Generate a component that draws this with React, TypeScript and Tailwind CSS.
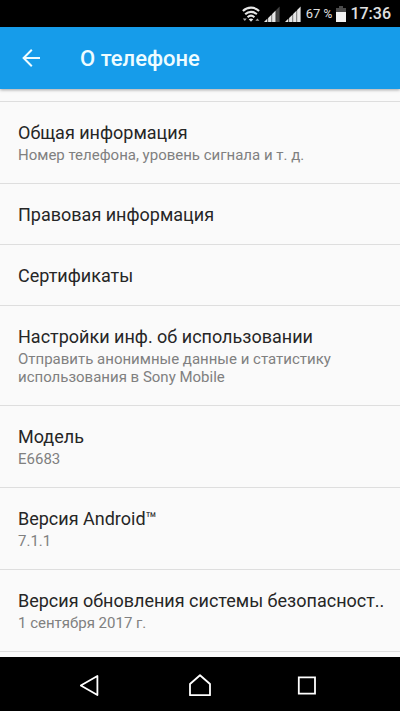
type AboutItem = {
  title: string;
  lines?: string[];
};

const ITEMS: AboutItem[] = [
  { title: 'Общая информация', lines: ['Номер телефона, уровень сигнала и т. д.'] },
  { title: 'Правовая информация' },
  { title: 'Сертификаты' },
  {
    title: 'Настройки инф. об использовании',
    lines: ['Отправить анонимные данные и статистику', 'использования в Sony Mobile'],
  },
  { title: 'Модель', lines: ['E6683'] },
  { title: 'Версия Android™', lines: ['7.1.1'] },
  { title: 'Версия обновления системы безопасност..', lines: ['1 сентября 2017 г.'] },
];

function WifiIcon() {
  return (
    <svg width="18" height="16" viewBox="0 0 18 16" fill="none" stroke="#e6e6e6" strokeWidth="2.2">
      <path d="M.9 5C5.6.6 12.4.6 17.1 5" />
      <path d="M3.2 8.2c3.4-3.2 8.2-3.2 11.6 0" />
      <path d="M5.6 11.2c2.1-1.9 4.7-1.9 6.8 0" />
      <path d="M9 15.8 6.7 13.3c1.4-1 3.2-1 4.6 0z" fill="#e6e6e6" stroke="none" />
      <path d="M.8 12.6h4L2.8 15zM13.4 14.8h4l-2-2.4z" fill="#a8a8a8" stroke="none" />
    </svg>
  );
}

// weak: последняя полоска погашена
function SignalIcon({ weak = false }: { weak?: boolean }) {
  return (
    <svg width="16" height="16" viewBox="0 0 16 16">
      <path d="M0 16 3.4 12.6V16z" fill="#e6e6e6" />
      <path d="M4.1 11.9 7.6 8.4V16H4.1z" fill="#e6e6e6" />
      <path d="M8.1 7.9 11.6 4.4V16H8.1z" fill="#e6e6e6" />
      <path d="M12.1 3.9 15.6.4V16h-3.5z" fill={weak ? '#444444' : '#e6e6e6'} />
    </svg>
  );
}

function BatteryIcon() {
  return (
    <svg width="10" height="16" viewBox="0 0 10 16">
      <path d="M3 0h4v2h3v4H0V2h3z" fill="#4a4a4a" />
      <path d="M0 6h10v10H0z" fill="#f2f2f2" />
    </svg>
  );
}

function StatusBar() {
  return (
    <div className="flex h-[27px] items-center justify-end bg-black pr-[9px] text-[#e0e0e0]">
      <WifiIcon />
      <span className="ml-1 flex gap-[5px]">
        <SignalIcon weak />
        <SignalIcon />
      </span>
      <span className="ml-[5px] text-[13px]">
        67 <span className="text-[12px]">%</span>
      </span>
      <span className="ml-1">
        <BatteryIcon />
      </span>
      <span className="ml-1 text-[16px] font-medium">17:36</span>
    </div>
  );
}

function Header() {
  return (
    <header className="relative flex h-[62px] items-center bg-[#169cea] pt-[2px] pl-5 text-[#eefcff] shadow-[0_1px_3px_rgba(0,0,0,0.35)]">
      <button type="button" aria-label="Назад" className="cursor-pointer">
        <svg width="22" height="20" viewBox="0 0 22 20" fill="none" stroke="currentColor" strokeWidth="2">
          <path d="M20 9H3.6M11.8.8 3.6 9l8.2 8.2" />
        </svg>
      </button>
      <h1 className="ml-[38px] text-[22px] leading-7 font-medium">О телефоне</h1>
    </header>
  );
}

function AboutRow({ item }: { item: AboutItem }) {
  return (
    <li className="border-t border-[#dedede]">
      <button
        type="button"
        className={`block w-full cursor-pointer px-[18px] pt-[19px] text-left ${item.lines ? 'pb-[19px]' : 'pb-[17px]'}`}
      >
        <span className="block text-[18px] leading-6 whitespace-nowrap text-[#262626]">{item.title}</span>
        {item.lines && (
          <span className="mt-px block text-[15px] leading-[18px] text-[#808080]">
            {item.lines.map((line) => (
              <span key={line} className="block">{line}</span>
            ))}
          </span>
        )}
      </button>
    </li>
  );
}

function NavBar() {
  return (
    <nav className="flex h-[54px] items-center justify-center gap-[84px] bg-black pt-1 text-white">
      <button type="button" aria-label="Назад" className="cursor-pointer">
        <svg width="24" height="24" viewBox="0 0 24 24" fill="none" stroke="currentColor" strokeWidth="1.8" strokeLinejoin="round">
          <path d="M17.4 2v19L.8 11.5z" />
        </svg>
      </button>
      <button type="button" aria-label="Домой" className="cursor-pointer">
        <svg width="24" height="24" viewBox="0 0 24 24" fill="none" stroke="currentColor" strokeWidth="1.8" strokeLinejoin="round">
          <path d="M12 1.2 2 10v11.2h20V10z" />
        </svg>
      </button>
      <button type="button" aria-label="Последние приложения" className="cursor-pointer">
        <svg width="24" height="24" viewBox="0 0 24 24" fill="none" stroke="currentColor" strokeWidth="1.8">
          <path d="M2.8 3.4h16.2v16.2H2.8z" />
        </svg>
      </button>
    </nav>
  );
}

export default function App() {
  return (
    <div className="flex min-h-screen flex-col bg-[#fafafa] font-[Roboto,sans-serif]">
      <StatusBar />
      <Header />
      <main className="flex-1 pt-3">
        <ul className="border-b border-[#dedede]">
          {ITEMS.map((item) => (
            <AboutRow key={item.title} item={item} />
          ))}
        </ul>
      </main>
      <NavBar />
    </div>
  );
}
